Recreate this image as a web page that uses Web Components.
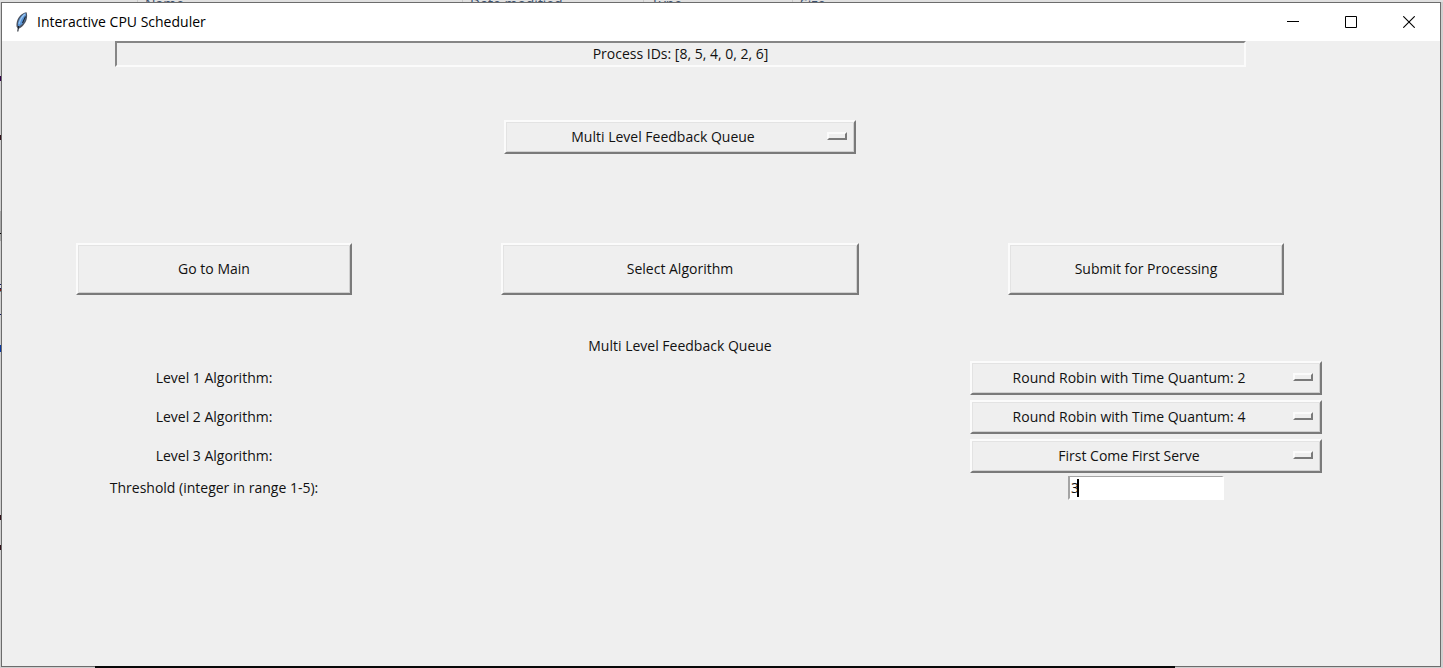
<!DOCTYPE html>
<html lang="en">
<head>
<meta charset="utf-8">
<meta name="viewport" content="width=device-width, initial-scale=1">
<title>Interactive CPU Scheduler</title>
<style>
  html, body { margin: 0; height: 100%; }
  body {
    font-family: "Open Sans", "Noto Sans", sans-serif;
    font-size: 14px;
    line-height: 20px;
    color: #111;
    --face: #efefef;
    --columns: 424fr 508fr 424fr 82fr;
  }
</style>
</head>
<body>
<desk-top>
  <explorer-header slot="behind"></explorer-header>
  <app-window heading="Interactive CPU Scheduler">
    <scheduler-form></scheduler-form>
  </app-window>
</desk-top>

<script>
const define = (name, html, setup) => {
  const template = document.createElement('template');
  template.innerHTML = '<style>*{box-sizing:border-box}</style>' + html;
  customElements.define(name, class extends HTMLElement {
    connectedCallback() {
      if (this.shadowRoot) return;
      const root = this.attachShadow({ mode: 'open' });
      root.append(template.content.cloneNode(true));
      if (setup) setup(root, this);
    }
  });
};

/* Desktop: slivers of other windows show round the edge of the app */
define('desk-top', `
  <style>
    :host {
      display: grid; grid-template-rows: 2px 1fr; min-height: 100%;
      box-sizing: border-box; padding-bottom: 1px;
      background:
        linear-gradient(#300048, #300048) 0 76px / 1px 5px no-repeat,
        linear-gradient(#301018, #301018) 0 135px / 1px 5px no-repeat,
        linear-gradient(#000, #000) 0 233px / 1px 1px no-repeat,
        linear-gradient(#a8a8a8, #a8a8a8) 0 211px / 1px 30px no-repeat,
        linear-gradient(#101860 1px, #ddd 1px 4px, #101860 4px 5px, #802010 5px 7px, #608090 7px) 0 284px / 1px 8px no-repeat,
        linear-gradient(#101860, #101860) 0 314px / 1px 1px no-repeat,
        linear-gradient(#0838a0, #0838a0) 0 345px / 1px 7px no-repeat,
        linear-gradient(#301018, #301018) 0 515px / 1px 5px no-repeat,
        linear-gradient(#301018, #301018) 0 545px / 1px 5px no-repeat,
        #cfcfcf;
    }
    .front { display: grid; padding: 0 2px 0 1px; position: relative; }
    .front::after { content: ""; position: absolute; left: 95px; right: 268px; bottom: -1px; height: 2px; background: #080808; }
  </style>
  <slot name="behind"></slot>
  <div class="front"><slot></slot></div>
`);

define('explorer-header', `
  <style>
    :host { display: grid; grid-template-columns: 137px 325px 181px 149px 100px 1fr;
      overflow: hidden; background: #e0e0e0; color: #3a506e; line-height: 8px; align-items: end; height: 2px; }
    span { padding-left: 7px; border-left: 1px solid #c8c8c8; }
    span:first-child { border: 0; }
  </style>
  <span></span><span>Name</span><span>Date modified</span><span>Type</span><span>Size</span><span></span>
`);

define('app-window', `
  <style>
    :host { display: flex; flex-direction: column; border: 1px solid #6c6c6c;
      box-sizing: border-box; background: var(--face); min-width: 0; }
    header { display: flex; align-items: center; height: 38px; flex: none; background: #fff; color: #000; padding-right: 2px; }
    .feather { margin: 0 8px 0 12px; flex: none; }
    h1 { margin: 0; font: inherit; flex: 1; }
    button { width: 58px; height: 38px; padding: 0; border: 0; background: none; display: grid; place-items: center; }
    button svg { display: block; }
  </style>
  <header>
    <svg class="feather" width="15" height="22" viewBox="0 0 15 22" aria-hidden="true">
      <path d="M12.500 1.200C9 1.500 5.500 4.500 3.600 8.500c-1 2.300-1.400 5-1 7.200l1.700 2.300C8 16.500 11.500 12.500 12.600 8.500c.8-2.600.7-5.300-.1-7.300z" fill="#4a5261"/>
      <path d="M11.900 2C8.500 3.200 5.600 6.500 4.500 10c-.7 2-.8 4-.4 6C7.500 14.500 10.300 11.500 11.300 8c.6-2 .8-4 .6-6z" fill="#5a96d8"/>
      <path d="M11 3C8 5.500 6 9 5 13" fill="none" stroke="#9cc6f0" stroke-width="1.200"/>
      <path d="M11.500 5.500L8.500 12M4.600 15l-.8 5.500" fill="none" stroke="#1b222c" stroke-width="1.100"/>
    </svg>
    <h1></h1>
    <button type="button" aria-label="Minimize"><svg width="12" height="12"><path d="M0 5.500h12" stroke="#000"/></svg></button>
    <button type="button" aria-label="Maximize"><svg width="12" height="12"><path d="M.5.5h11v11H.5z" fill="none" stroke="#000"/></svg></button>
    <button type="button" aria-label="Close"><svg width="12" height="12"><path d="M.3.3l11.400 11.400M11.700.3L.3 11.700" stroke="#000" stroke-width="1.100"/></svg></button>
  </header>
  <slot></slot>
`, (root, host) => { root.querySelector('h1').textContent = host.getAttribute('heading'); });

define('push-button', `
  <style>
    :host { display: block; width: 276px; }
    :host([wide]) { width: 358px; }
    button { display: block; width: 100%; height: 52px; padding: 0; font: inherit; color: inherit;
      background: var(--face); border: 2px solid; border-color: #fbfbfb #7a7a7a #7a7a7a #fbfbfb;
      box-shadow: inset 1px 1px #e3e3e3, inset -1px -1px #d0d0d0; }
  </style>
  <button type="button"><slot></slot></button>
`);

const selectCss = `
  .menu { position: relative; width: 352px; }
  select { display: block; width: 100%; height: 34px; padding: 0 34px 0 0; margin: 0; appearance: none;
    font: inherit; color: inherit; text-align: center; text-align-last: center; border-radius: 0;
    background: var(--face); border: 2px solid; border-color: #fbfbfb #7a7a7a #7a7a7a #fbfbfb;
    box-shadow: inset 1px 1px #e3e3e3, inset -1px -1px #d0d0d0; }
  .menu::after { content: ""; position: absolute; right: 9px; top: 12px; width: 20px; height: 8px; box-sizing: border-box;
    border: 2px solid; border-color: #fbfbfb #7a7a7a #7a7a7a #fbfbfb; pointer-events: none; }
`;

define('algorithm-menu', `
  <style>:host { display: block; } ${selectCss}</style>
  <div class="menu"><select aria-label="Scheduling algorithm">
    <option>Multi Level Feedback Queue</option><option>First Come First Serve</option>
  </select></div>
`);

define('level-row', `
  <style>
    :host { display: grid; grid-template-columns: var(--columns); align-items: center; justify-items: center; }
    .menu { grid-column: 3; }
    ${selectCss}
  </style>
  <label for="choice"></label>
  <div class="menu"><select id="choice">
    <option>Round Robin with Time Quantum: 2</option>
    <option>Round Robin with Time Quantum: 4</option>
    <option>First Come First Serve</option>
  </select></div>
`, (root, host) => {
  root.querySelector('label').textContent = host.getAttribute('label');
  root.querySelector('select').value = host.getAttribute('value');
});

define('threshold-row', `
  <style>
    :host { display: grid; grid-template-columns: var(--columns); align-items: center; justify-items: center; }
    .entry { grid-column: 3; position: relative; width: 156px; }
    input { display: block; width: 100%; height: 24px; padding: 0 1px; font: inherit; color: inherit;
      border: 2px solid; border-color: #a4a4a4 #fff #fff #a4a4a4; border-top-width: 1px; border-radius: 0; background: #fff; outline: 0; }
    .caret { position: absolute; left: 9px; top: 3px; width: 2px; height: 18px; background: #000; }
  </style>
  <label for="threshold">Threshold (integer in range 1-5):</label>
  <div class="entry"><input id="threshold" type="text" value="3"><span class="caret"></span></div>
`);

define('scheduler-form', `
  <style>
    :host { display: block; }
    .row { display: grid; grid-template-columns: var(--columns); justify-items: center; }
    .ids { grid-column: 1 / 4; justify-self: stretch; margin: 0 112px 0 113px; height: 26px; line-height: 22px; text-align: center;
      border: 2px solid; border-color: #868686 #fbfbfb #fbfbfb #868686; }
    .pick { margin-top: 53px; }
    .pick > * { grid-column: 2; }
    .actions { margin-top: 89px; }
    .levels { display: grid; gap: 5px; margin-top: 5px; }
    h2 { grid-column: 2; margin: 41px 0 0; font: inherit; }
    threshold-row { margin-top: 3px; }
  </style>
  <div class="row"><div class="ids">Process IDs: [8, 5, 4, 0, 2, 6]</div></div>
  <div class="row pick"><algorithm-menu></algorithm-menu></div>
  <div class="row actions">
    <push-button>Go to Main</push-button>
    <push-button wide>Select Algorithm</push-button>
    <push-button>Submit for Processing</push-button>
  </div>
  <div class="row"><h2>Multi Level Feedback Queue</h2></div>
  <div class="levels">
    <level-row label="Level 1 Algorithm:" value="Round Robin with Time Quantum: 2"></level-row>
    <level-row label="Level 2 Algorithm:" value="Round Robin with Time Quantum: 4"></level-row>
    <level-row label="Level 3 Algorithm:" value="First Come First Serve"></level-row>
  </div>
  <threshold-row></threshold-row>
`);
</script>
</body>
</html>
